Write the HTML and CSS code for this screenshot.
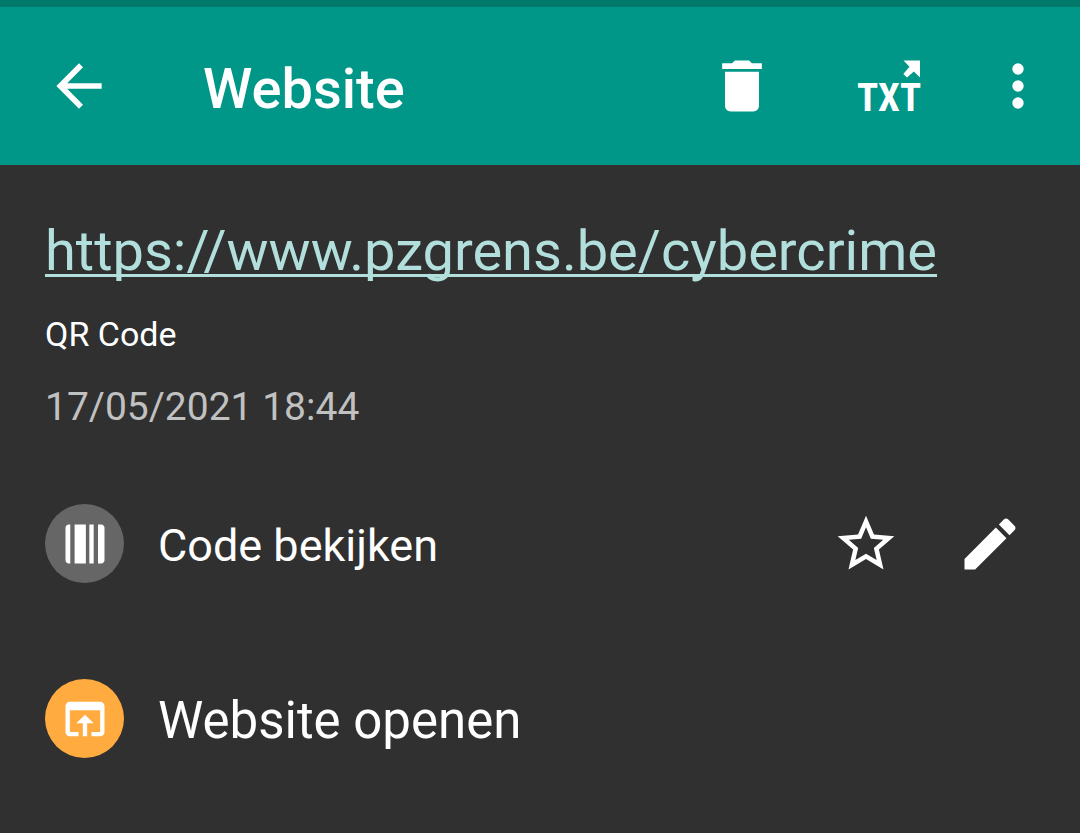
FILE: index.html
```
<!DOCTYPE html>
<html lang="nl">
<head>
  <meta charset="UTF-8" />
  <meta name="viewport" content="width=device-width, initial-scale=1.0" />
  <title>Website</title>
  <link rel="stylesheet" href="styles.css">
</head>
<body>
  <header class="toolbar">
    <button class="back" type="button" aria-label="Terug">
      <svg class="icon" viewBox="0 0 24 24"><path d="M20 11H7.83l5.59-5.59L12 4l-8 8 8 8 1.41-1.41L7.83 13H20v-2z"/></svg>
    </button>
    <h1 class="title">Website</h1>
    <button class="action" type="button" aria-label="Verwijderen">
      <svg class="icon" viewBox="0 0 24 24"><path d="M6 19c0 1.1.9 2 2 2h8c1.1 0 2-.9 2-2V7H6v12zM19 4h-3.5l-1-1h-5l-1 1H5v2h14V4z"/></svg>
    </button>
    <button class="action" type="button" aria-label="Delen als TXT">
      <svg class="icon" viewBox="0 0 68 68">
        <text class="icon-text" x="34" y="59" text-anchor="middle">TXT</text>
        <path d="M48.500 8.500H65V25.500L58.800 19.500L52 25.500L48.300 22L54.500 14.800Z"/>
      </svg>
    </button>
    <button class="action overflow" type="button" aria-label="Meer opties">
      <svg class="icon" viewBox="0 0 24 24"><circle cx="12" cy="6" r="2"/><circle cx="12" cy="12" r="2"/><circle cx="12" cy="18" r="2"/></svg>
    </button>
  </header>

  <main>
    <section class="details">
      <a class="url" href="https://www.pzgrens.be/cybercrime">https://www.pzgrens.be/cybercrime</a>
      <p class="format">QR Code</p>
      <p class="date">17/05/2021 18:44</p>
    </section>

    <div class="row">
      <button class="item" type="button">
        <span class="badge">
          <svg class="badge-icon" viewBox="0 0 24 24"><path d="M5.2 3H4.5C3.7 3 3 3.7 3 4.5v15c0 .8.7 1.5 1.5 1.5h.7zM7.2 3H12.400v18H7.2zM14 3h2v18h-2zM18 3h1.5c.8 0 1.500.7 1.500 1.500v15c0 .8-.7 1.500-1.500 1.500H18z"/></svg>
        </span>
        <span class="label">Code bekijken</span>
      </button>
      <button class="row-action" type="button" aria-label="Favoriet">
        <svg class="icon" viewBox="0 0 24 24"><path d="M22 9.24l-7.19-.62L12 2 9.19 8.63 2 9.24l5.46 4.73L5.82 21 12 17.27 18.18 21l-1.63-7.03L22 9.24zM12 15.4l-3.76 2.27 1-4.28-3.32-2.88 4.38-.38L12 6.1l1.71 4.04 4.38.38-3.32 2.88 1 4.28L12 15.4z"/></svg>
      </button>
      <button class="row-action" type="button" aria-label="Bewerken">
        <svg class="icon" viewBox="0 0 24 24"><path d="M3 17.25V21h3.75L17.81 9.94l-3.75-3.75L3 17.25zM20.71 7.04c.39-.39.39-1.02 0-1.41l-2.34-2.34c-.39-.39-1.02-.39-1.41 0l-1.83 1.83 3.75 3.75 1.83-1.83z"/></svg>
      </button>
    </div>

    <div class="row">
      <button class="item" type="button">
        <span class="badge badge-open">
          <svg class="badge-icon" viewBox="0 0 24 24"><path d="M19 4H5c-1.11 0-2 .9-2 2v12c0 1.1.89 2 2 2h4v-2H5V8h14v10h-4v2h4c1.1 0 2-.9 2-2V6c0-1.1-.89-2-2-2zm-7 6l-4 4h3v6h2v-6h3l-4-4z"/></svg>
        </span>
        <span class="label label-large">Website openen</span>
      </button>
    </div>
  </main>
</body>
</html>
```
FILE: styles.css
```
* {
  box-sizing: border-box;
}

body {
  margin: 0;
  background: #303030;
  color: #fff;
  font-family: Roboto, sans-serif;
}

button {
  display: flex;
  align-items: center;
  justify-content: center;
  padding: 0;
  border: 0;
  background: none;
  color: inherit;
  font: inherit;
  cursor: pointer;
}

.icon {
  width: 68px;
  height: 68px;
  fill: currentColor;
}

.icon-text {
  font: bold 39px "Liberation Sans Narrow", "Roboto Condensed", Roboto, sans-serif;
}

/* toolbar, with the edge of the status bar above it */
.toolbar {
  display: flex;
  align-items: center;
  min-height: 165px;
  padding: 0 7px 0 45px;
  border-top: 7px solid #00796b;
  background: #009688;
}

.title {
  flex: 1;
  margin: 0;
  padding: 6px 0 0 90px;
  font-size: 56px;
  font-weight: 500;
  line-height: 66px;
}

.action {
  width: 147px;
}

.overflow {
  width: 111px;
}

.details {
  display: flex;
  flex-direction: column;
  align-items: flex-start;
  gap: 30px;
  padding: 53px 45px 26px;
}

.url {
  color: #b2dfdb;
  font-size: 56px;
  line-height: 66px;
  text-decoration-thickness: 3px;
  text-decoration-skip-ink: none;
  text-underline-offset: 4px;
}

.format,
.date {
  margin: 0;
}

.format {
  font-size: 34px;
  line-height: 40px;
}

.date {
  color: #c1c1c1;
  font-size: 39px;
  line-height: 46px;
}

.row {
  display: flex;
  align-items: center;
  min-height: 175px;
  padding: 0 28px 0 45px;
}

.item {
  flex: 1;
  justify-content: flex-start;
  gap: 34px;
}

.badge {
  display: flex;
  align-items: center;
  justify-content: center;
  width: 79px;
  height: 79px;
  border-radius: 50%;
  background: #666;
}

.badge-open {
  background: #ffab40;
}

.badge-icon {
  width: 52px;
  height: 52px;
  fill: currentColor;
}

.label {
  padding-top: 4px;
  font-size: 45px;
}

.label-large {
  font-size: 51px;
}

.row-action {
  width: 124px;
}
```
